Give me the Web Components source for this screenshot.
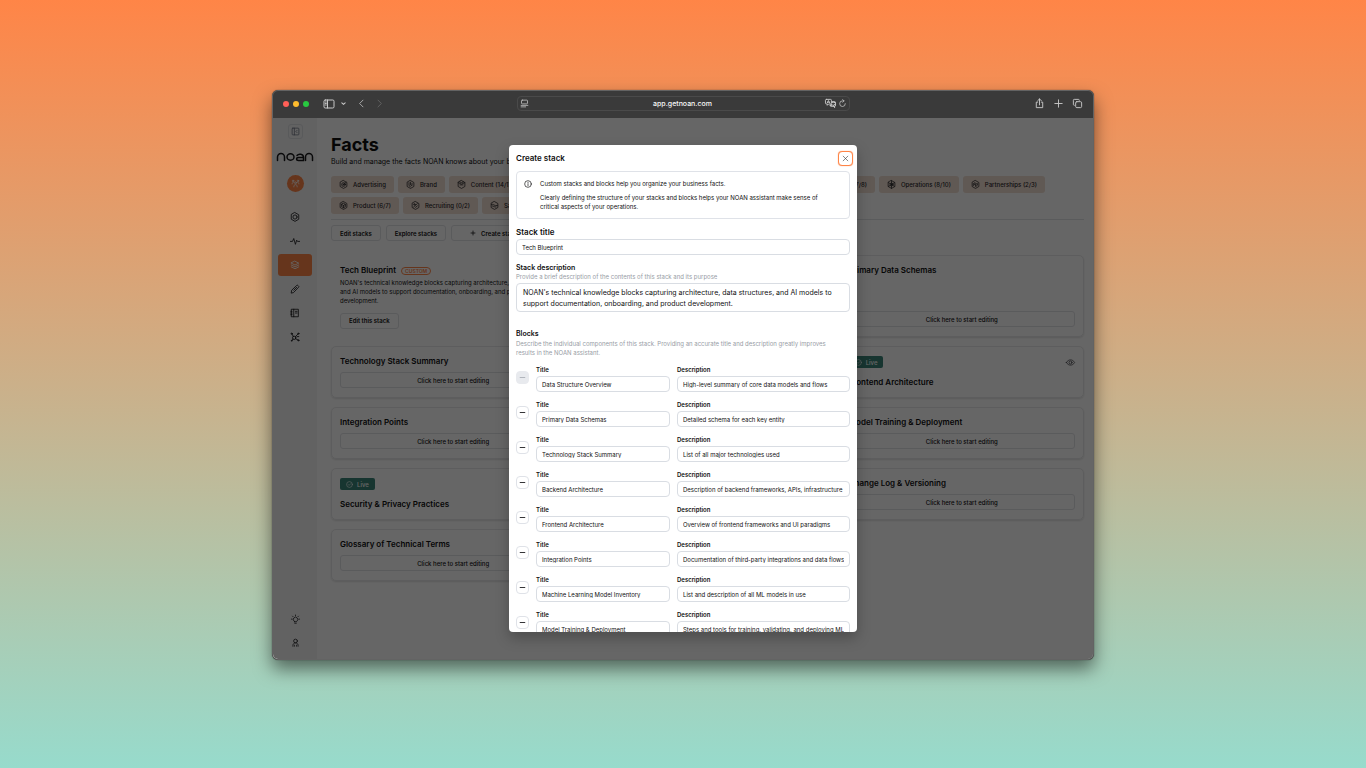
<!DOCTYPE html>
<html lang="en">
<head>
<meta charset="utf-8">
<title>NOAN - Facts</title>
<style>
    body {
        margin: 0;
        font-family: Inter, "Liberation Sans", sans-serif;
        color: #0f0f10;
    }
</style>
</head>
<body>
<noan-desktop></noan-desktop>

<script>
const ICONS = {
    sidebar: '<rect x="2" y="4" width="20" height="16" rx="2.5"/><path d="M9 4v16M5 8h1.5M5 11h1.5M5 14h1.5"/>',
    'chevron-down': '<path d="M4 9l8 7 8-7"/>',
    'chevron-left': '<path d="M16 3l-9 9 9 9"/>',
    'chevron-right': '<path d="M8 3l9 9-9 9"/>',
    reader: '<rect x="4" y="3" width="16" height="10" rx="2"/><path d="M3 17h18M3 21h12"/>',
    translate: '<path d="M3 3h9a2 2 0 0 1 2 2v6a2 2 0 0 1-2 2H8l-3 3v-3H3a2 2 0 0 1-2-2V5a2 2 0 0 1 2-2z"/><path d="M5 10.500l2.500-5 2.500 5M6 9h3"/><path fill="currentColor" d="M16 8h5a2 2 0 0 1 2 2v6a2 2 0 0 1-2 2v3l-3-3h-5a2 2 0 0 1-2-2v-1h2a3 3 0 0 0 3-3z"/><path stroke="#3a3a3a" d="M16 12h5M18.500 11v1c0 2-1 3-3 4M17 13c1 2 2 3 4 3"/>',
    reload: '<path d="M19.500 12.500A7.500 7.500 0 1 1 12 5h4M12.500 1.500L16 5l-3.500 3.500"/>',
    share: '<path d="M8 9H5v12h14V9h-3M12 15V2M8 6l4-4 4 4"/>',
    plus: '<path d="M12 4v16M4 12h16"/>',
    tabs: '<rect x="8" y="8" width="13" height="13" rx="2.500"/><path d="M5 16a2 2 0 0 1-2-2V5a2 2 0 0 1 2-2h9a2 2 0 0 1 2 2"/>',
    collapse: '<rect x="3" y="3" width="18" height="18" rx="2"/><path d="M9 3v18M16 9l-3 3 3 3"/>',
    team: '<circle cx="12" cy="10" r="2.500"/><circle cx="5.500" cy="5" r="2"/><circle cx="18.500" cy="5" r="2"/><path d="M7.500 21c0-4 1.500-6 4.500-6s4.500 2 4.500 6M3 13c0-2.500 1-4 3-4M21 13c0-2.500-1-4-3-4"/>',
    hexnut: '<path d="M12 1.500l9 5.200v10.600l-9 5.200-9-5.200V6.700z"/><circle cx="12" cy="12" r="5"/>',
    activity: '<path d="M1 13h5l3-7 4 14 3-10 2 3h5"/>',
    layers: '<path d="M12 3l9 4.500-9 4.500-9-4.500zM3 12l9 4.500 9-4.500M3 16.500L12 21l9-4.500"/>',
    pencil: '<path d="M3 21l1-6L16 3.500a2 2 0 0 1 3 0l1.500 1.500a2 2 0 0 1 0 3L9 20zM9 15l7-7"/>',
    book: '<path d="M4 3h16v18H4zM9 3v18M13 8h4M13 12h4M2 8h3M2 12h3M2 16h3"/>',
    network: '<circle cx="10" cy="14" r="4"/><circle cx="4" cy="4" r="1.500"/><circle cx="20" cy="4" r="1.500"/><circle cx="20" cy="20" r="1.500"/><circle cx="4" cy="21" r="1"/><path d="M5 5l3 6M19 5l-6 6M13 16l6 3M7 17l-2 3M17 11h4"/>',
    bulb: '<path d="M9 17a6 6 0 1 1 6 0v1H9zM10 22h4M12 0v2M1 11h2M21 11h2M4 3l1.500 1.500M20 3l-1.500 1.500"/>',
    user: '<circle cx="12" cy="8" r="5"/><path d="M5 22v-2c0-4 3-7 7-7s7 3 7 7v2M9 22v-3M15 22v-3"/>',
    minus: '<path d="M4 12h16"/>',
    close: '<path d="M4 4l16 16M20 4L4 20"/>',
    info: '<circle cx="12" cy="12" r="10"/><path d="M12 11v6M12 7v1"/>',
    check: '<circle cx="12" cy="12" r="10"/><path d="M7.500 12l3 3 6-6"/>',
    eye: '<path d="M1 12c3-5 7-7 11-7s8 2 11 7c-3 5-7 7-11 7s-8-2-11-7z"/><circle cx="12" cy="12" r="4"/>',
    advertising: '<path d="M12 1.500l9 5.200v10.600l-9 5.200-9-5.200V6.700z"/><circle cx="12" cy="12" r="5"/><circle cx="12" cy="12" r="1.500"/><path d="M13 11l6-5"/>',
    brand: '<path d="M12 1.500l9 5.200v10.600l-9 5.200-9-5.200V6.700zM8 7v8l4 3M12 6v7l4 2V9"/>',
    content: '<path d="M12 1.500l9 5.200v10.600l-9 5.200-9-5.200V6.700zM3 7l9 4 9-4M7 5l5 2 5-2M8 13l8 0"/>',
    operations: '<path d="M12 1.500l9 5.200v10.600l-9 5.200-9-5.200V6.700zM12 2v20M4 7l16 10M20 7L4 17"/><circle cx="12" cy="12" r="4"/>',
    partnerships: '<path d="M12 1.500l9 5.200v10.600l-9 5.200-9-5.200V6.700zM7 9l4-2v4l-4 3zM13 11l4-2v5l-4 3z"/>',
    product: '<path d="M12 1.500l9 5.200v10.600l-9 5.200-9-5.200V6.700z"/><path d="M12 6l5 3v6l-5 3-5-3V9zM7 9l5 3 5-3M12 12v6"/>',
    recruiting: '<path d="M12 1.500l9 5.200v10.600l-9 5.200-9-5.200V6.700z"/><circle cx="9" cy="9" r="2"/><path d="M7 16l10-9M12 17l5-4"/>',
    sales: '<path d="M12 1.500l9 5.200v10.600l-9 5.200-9-5.200V6.700zM4 9c5-3 7 6 16 3M6 13c3 0 5 4 10 3"/>'
};

class UiIcon extends HTMLElement {
    constructor() {
        super();
        this.attachShadow({ mode: 'open' });
    }

    connectedCallback() {
        this.shadowRoot.innerHTML = `
            <style>
                :host { display: inline-block; flex: none; width: 9px; height: 9px; }
                svg {
                    display: block;
                    width: 100%;
                    height: 100%;
                    overflow: visible;
                    fill: none;
                    stroke: currentColor;
                    stroke-width: var(--icon-stroke, 2);
                    stroke-linecap: round;
                    stroke-linejoin: round;
                }
            </style>
            <svg viewBox="0 0 24 24" aria-hidden="true">${ICONS[this.getAttribute('name')] || ''}</svg>
        `;
    }
}

// Page background with the browser window on it
class NoanDesktop extends HTMLElement {
    constructor() {
        super();
        this.attachShadow({ mode: 'open' });
    }

    connectedCallback() {
        this.shadowRoot.innerHTML = `
            <style>
                :host {
                    display: flex;
                    box-sizing: border-box;
                    height: 100vh;
                    min-height: 480px;
                    padding: 90px 272px 108px;
                    background: linear-gradient(#ff8547, #97dbcc);
                }
                browser-window { flex: 1; min-width: 0; }
                .page { display: flex; height: 100%; background: #fff; }
                side-nav { flex: none; }
                facts-page { flex: 1; min-width: 0; }
            </style>
            <browser-window address="app.getnoan.com">
                <div class="page">
                    <side-nav></side-nav>
                    <facts-page></facts-page>
                </div>
                <create-stack-dialog slot="overlay"></create-stack-dialog>
            </browser-window>
        `;
    }
}

class BrowserWindow extends HTMLElement {
    constructor() {
        super();
        this.attachShadow({ mode: 'open' });
    }

    connectedCallback() {
        this.shadowRoot.innerHTML = `
            <style>
                :host {
                    display: flex;
                    flex-direction: column;
                    overflow: hidden;
                    box-sizing: border-box;
                    border: 1px solid #636363;
                    border-radius: 6px;
                    box-shadow: 0 0 1px #222, 0 9px 18px rgba(0, 0, 0, 0.5);
                    background: #3a3a3a;
                }
                header {
                    display: grid;
                    grid-template-columns: 1fr 333px 1fr;
                    align-items: center;
                    flex: none;
                    box-sizing: border-box;
                    height: 27px;
                    padding: 0 10px 2px;
                    color: #c9c9c9;
                }
                .left, .right { display: flex; align-items: center; }
                .right { justify-content: flex-end; gap: 8px; }
                .light { width: 6px; height: 6px; border-radius: 50%; margin-right: 4px; }
                .light.green { margin-right: 5px; }
                .red { background: #ff5f57; }
                .yellow { background: #febc2e; }
                .green { background: #28c840; }
                button {
                    display: flex;
                    padding: 0;
                    border: 0;
                    background: none;
                    color: inherit;
                }
                .left button { margin-left: 9px; }
                .left .more { margin-left: 6px; }
                .left .more ui-icon { width: 5px; height: 5px; --icon-stroke: 5; }
                .left .back { margin-left: 11px; }
                .left .forward { color: #6c6c6c; }
                .wide ui-icon { width: 12px; height: 12px; }
                .right ui-icon { width: 11px; height: 11px; }
                .address {
                    display: flex;
                    align-items: center;
                    box-sizing: border-box;
                    height: 15px;
                    padding: 0 2px;
                    border: 1px solid #4a4a4a;
                    border-radius: 4px;
                }
                input {
                    flex: 1;
                    min-width: 0;
                    padding: 0 0 0 12px;
                    border: 0;
                    background: none;
                    color: #f8f8f8;
                    font: 500 7px/9px Inter, sans-serif;
                    text-align: center;
                    outline: 0;
                }
                .address .wide ui-icon { width: 11px; height: 11px; }
                .address button + button { margin-left: 2px; }
                main { position: relative; flex: 1; min-height: 0; }
            </style>
            <header>
                <div class="left">
                    <span class="light red"></span>
                    <span class="light yellow"></span>
                    <span class="light green"></span>
                    <button class="wide" aria-label="Sidebar"><ui-icon name="sidebar"></ui-icon></button>
                    <button class="more" aria-label="Tab groups"><ui-icon name="chevron-down"></ui-icon></button>
                    <button class="back" aria-label="Back"><ui-icon name="chevron-left"></ui-icon></button>
                    <button class="forward" aria-label="Forward"><ui-icon name="chevron-right"></ui-icon></button>
                </div>
                <div class="address">
                    <button aria-label="Reader"><ui-icon name="reader"></ui-icon></button>
                    <input aria-label="Address" value="${this.getAttribute('address')}">
                    <button class="wide" aria-label="Translate"><ui-icon name="translate"></ui-icon></button>
                    <button aria-label="Reload"><ui-icon name="reload"></ui-icon></button>
                </div>
                <div class="right">
                    <button aria-label="Share"><ui-icon name="share"></ui-icon></button>
                    <button aria-label="New tab"><ui-icon name="plus"></ui-icon></button>
                    <button aria-label="Show tabs"><ui-icon name="tabs"></ui-icon></button>
                </div>
            </header>
            <main>
                <slot></slot>
                <slot name="overlay"></slot>
            </main>
        `;
    }
}

class SideNav extends HTMLElement {
    constructor() {
        super();
        this.attachShadow({ mode: 'open' });
    }

    connectedCallback() {
        const links = ['hexnut', 'activity', 'layers', 'pencil', 'book', 'network'];
        this.shadowRoot.innerHTML = `
            <style>
                :host {
                    display: flex;
                    flex-direction: column;
                    align-items: center;
                    box-sizing: border-box;
                    width: 44px;
                    padding: 6px 0;
                    background: #f5f5f6;
                }
                button {
                    display: flex;
                    align-items: center;
                    justify-content: center;
                    width: 15px;
                    height: 15px;
                    padding: 0;
                    border: 1px solid #dfe1e4;
                    border-radius: 3px;
                    background: none;
                    color: #6b7280;
                }
                .logo { width: 36px; height: 8px; margin: 14px 0; overflow: visible; }
                .avatar {
                    display: flex;
                    align-items: center;
                    justify-content: center;
                    width: 17px;
                    height: 17px;
                    margin-bottom: 14px;
                    border-radius: 50%;
                    background: #ff8547;
                    color: #fff;
                }
                nav { display: flex; flex-direction: column; gap: 2px; }
                a {
                    display: flex;
                    align-items: center;
                    justify-content: center;
                    width: 34px;
                    height: 22px;
                    border-radius: 3px;
                    color: #18181b;
                }
                a ui-icon { width: 10px; height: 10px; }
                a.active { background: #ff8547; color: #fff; }
                .bottom { margin-top: auto; gap: 1px; }
                .bottom ui-icon { width: 9px; height: 9px; }
            </style>
            <button aria-label="Collapse"><ui-icon name="collapse"></ui-icon></button>
            <svg class="logo" viewBox="0 0 72 16" fill="none" stroke="#18181b" stroke-width="3" stroke-linecap="round" role="img" aria-label="noan">
                <path d="M1 15V8a6 6 0 0 1 14 0v7M57 15V8a6 6 0 0 1 14 0v7"/>
                <ellipse cx="27" cy="8" rx="7" ry="6.500"/>
                <path d="M40 5c3-4 13-4 13 4v6H43c-5 0-5-6 0-6h10"/>
            </svg>
            <span class="avatar"><ui-icon name="team"></ui-icon></span>
            <nav>
                ${links.map(name => `<a href="#${name}" aria-label="${name}" class="${name === 'layers' ? 'active' : ''}"><ui-icon name="${name}"></ui-icon></a>`).join('')}
            </nav>
            <nav class="bottom">
                <a href="#tips" aria-label="Tips"><ui-icon name="bulb"></ui-icon></a>
                <a href="#account" aria-label="Account"><ui-icon name="user"></ui-icon></a>
            </nav>
        `;
    }
}

class StackChip extends HTMLElement {
    constructor() {
        super();
        this.attachShadow({ mode: 'open' });
    }

    connectedCallback() {
        this.shadowRoot.innerHTML = `
            <style>
                :host { display: block; flex: none; }
                button {
                    display: flex;
                    align-items: center;
                    gap: 5px;
                    height: 17px;
                    padding: 0 8px;
                    border: 0;
                    border-radius: 3px;
                    background: #f1ded2;
                    color: #27272a;
                    font: 500 6px/9px Inter, sans-serif;
                    white-space: nowrap;
                }
            </style>
            <button><ui-icon name="${this.getAttribute('icon')}"></ui-icon><slot></slot></button>
        `;
    }
}

class OutlineButton extends HTMLElement {
    constructor() {
        super();
        this.attachShadow({ mode: 'open' });
        this.shadowRoot.innerHTML = `
            <style>
                :host { display: block; flex: none; }
                button {
                    display: flex;
                    align-items: center;
                    justify-content: center;
                    gap: 5px;
                    width: 100%;
                    height: 16px;
                    padding: 0 var(--pad, 8px);
                    border: 1px solid #e2e3e6;
                    border-radius: 3px;
                    background: none;
                    color: inherit;
                    font: var(--weight, 600) 6px/9px Inter, sans-serif;
                    white-space: nowrap;
                }
            </style>
            <button><slot></slot></button>
        `;
    }
}

// One block of the stack: either live or still waiting for its text
class FactCard extends HTMLElement {
    constructor() {
        super();
        this.attachShadow({ mode: 'open' });
    }

    connectedCallback() {
        const live = this.hasAttribute('live');
        this.shadowRoot.innerHTML = `
            <style>
                :host {
                    display: flex;
                    flex-direction: column;
                    justify-content: space-between;
                    box-sizing: border-box;
                    padding: 9px 8px;
                    border: 1px solid #e8e9eb;
                    border-radius: 5px;
                    box-shadow: 0 1px 2px rgba(0, 0, 0, 0.12);
                }
                h3 { margin: 0; font: 600 8px/11px Inter, sans-serif; white-space: nowrap; }
                .top { display: flex; align-items: center; justify-content: space-between; color: #3f3f46; }
                .live {
                    display: flex;
                    align-items: center;
                    gap: 4px;
                    box-sizing: border-box;
                    height: 12px;
                    padding: 0 6px;
                    border-radius: 2px;
                    background: #3a8478;
                    color: #fff;
                    font: 500 6px/9px Inter, sans-serif;
                }
                .live ui-icon { width: 7px; height: 7px; }
                outline-button { --weight: 500; }
            </style>
            ${live ? '<div class="top"><span class="live"><ui-icon name="check"></ui-icon>Live</span><ui-icon name="eye"></ui-icon></div>' : ''}
            <h3><slot></slot></h3>
            ${live ? '' : '<outline-button>Click here to start editing</outline-button>'}
        `;
    }
}

class FactsPage extends HTMLElement {
    constructor() {
        super();
        this.attachShadow({ mode: 'open' });
    }

    connectedCallback() {
        this.shadowRoot.innerHTML = `
            <style>
                :host { display: block; padding: 15px 9px 0 14px; overflow: hidden; }
                h1 { margin: 0; font: 700 18px/24px Inter, sans-serif; }
                .lead { margin: 0 0 10px; font: 400 7px/9px Inter, sans-serif; white-space: nowrap; }
                .chips { display: flex; gap: 4px; margin-bottom: 4px; padding-right: 39px; }
                .space { flex: 1; }
                .actions {
                    display: flex;
                    gap: 5px;
                    margin-top: 5px;
                    padding: 5px 0 14px;
                    border-top: 1px solid #e2e3e6;
                }
                .create { --pad: 18px; }
                .create ui-icon { width: 6px; height: 6px; --icon-stroke: 3; }
                .grid {
                    display: grid;
                    grid-template-columns: repeat(3, minmax(0, 1fr));
                    grid-template-rows: 82px;
                    grid-auto-rows: 52px;
                    gap: 9px 10px;
                }
                .intro { padding: 10px 12px 0 9px; }
                .intro header { display: flex; align-items: center; gap: 5px; }
                .intro h2 { margin: 0; font: 600 8px/11px Inter, sans-serif; }
                .tag {
                    padding: 0 3px;
                    border: 1px solid #ff8547;
                    border-radius: 4px;
                    color: #ff8547;
                    font: 600 5px/6px Inter, sans-serif;
                }
                .intro p { margin: 2px 0; font: 400 6px/9px Inter, sans-serif; }
                .intro outline-button { display: inline-block; }
                .right { grid-column: 3; }
            </style>
            <h1>Facts</h1>
            <p class="lead">Build and manage the facts NOAN knows about your business.</p>
            <div class="chips">
                <stack-chip icon="advertising">Advertising</stack-chip>
                <stack-chip icon="brand">Brand</stack-chip>
                <stack-chip icon="content">Content (14/17)</stack-chip>
                <span class="space"></span>
                <stack-chip icon="hexnut">Market (7/8)</stack-chip>
                <stack-chip icon="operations">Operations (8/10)</stack-chip>
                <stack-chip icon="partnerships">Partnerships (2/3)</stack-chip>
            </div>
            <div class="chips">
                <stack-chip icon="product">Product (6/7)</stack-chip>
                <stack-chip icon="recruiting">Recruiting (0/2)</stack-chip>
                <stack-chip icon="sales">Sales</stack-chip>
            </div>
            <div class="actions">
                <outline-button>Edit stacks</outline-button>
                <outline-button>Explore stacks</outline-button>
                <outline-button class="create"><ui-icon name="plus"></ui-icon>Create stack</outline-button>
            </div>
            <div class="grid">
                <section class="intro">
                    <header><h2>Tech Blueprint</h2><span class="tag">CUSTOM</span></header>
                    <p>NOAN's technical knowledge blocks capturing architecture, data structures, and AI models to support documentation, onboarding, and product development.</p>
                    <outline-button>Edit this stack</outline-button>
                </section>
                <fact-card class="right">Primary Data Schemas</fact-card>
                <fact-card>Technology Stack Summary</fact-card>
                <fact-card class="right" live>Frontend Architecture</fact-card>
                <fact-card>Integration Points</fact-card>
                <fact-card class="right">Model Training &amp; Deployment</fact-card>
                <fact-card live>Security &amp; Privacy Practices</fact-card>
                <fact-card class="right">Change Log &amp; Versioning</fact-card>
                <fact-card>Glossary of Technical Terms</fact-card>
            </div>
        `;
    }
}

class BlockRow extends HTMLElement {
    constructor() {
        super();
        this.attachShadow({ mode: 'open' });
    }

    connectedCallback() {
        this.shadowRoot.innerHTML = `
            <style>
                :host { display: grid; grid-template-columns: 13px 134fr 173fr; gap: 7px; }
                button {
                    display: flex;
                    align-items: center;
                    justify-content: center;
                    width: 13px;
                    height: 13px;
                    margin-top: 6px;
                    padding: 0;
                    border: 1px solid #dfe2e8;
                    border-radius: 4px;
                    background: #fff;
                    color: #18181b;
                }
                button ui-icon { width: 7px; height: 7px; --icon-stroke: 3; }
                button:disabled { border-color: #e8eaee; background: #e8eaee; color: #a9adb5; }
                label { display: block; margin-bottom: 2px; font: 600 6px/9px Inter, sans-serif; }
                input {
                    display: block;
                    box-sizing: border-box;
                    width: 100%;
                    height: 16px;
                    padding: 0 5px;
                    border: 1px solid #d9dde3;
                    border-radius: 4px;
                    background: #fff;
                    color: inherit;
                    font: 400 6px/9px Inter, sans-serif;
                }
            </style>
            <button aria-label="Remove block" ${this.hasAttribute('locked') ? 'disabled' : ''}><ui-icon name="minus"></ui-icon></button>
            <div>
                <label for="title">Title</label>
                <input id="title" value="${this.getAttribute('heading').replace('&', '&amp;')}">
            </div>
            <div>
                <label for="description">Description</label>
                <input id="description" value="${this.getAttribute('description')}">
            </div>
        `;
    }
}

class CreateStackDialog extends HTMLElement {
    constructor() {
        super();
        this.attachShadow({ mode: 'open' });
    }

    connectedCallback() {
        this.shadowRoot.innerHTML = `
            <style>
                :host {
                    position: absolute;
                    inset: 0;
                    display: flex;
                    align-items: center;
                    justify-content: center;
                    background: rgba(0, 0, 0, 0.6);
                }
                form {
                    box-sizing: border-box;
                    width: 348px;
                    max-width: 90%;
                    height: 90%;
                    padding: 6px 7px 0;
                    overflow: hidden;
                    border-radius: 4px;
                    background: #fff;
                    box-shadow: 0 6px 14px rgba(0, 0, 0, 0.25);
                }
                header { display: flex; align-items: center; justify-content: space-between; margin: 0 -3px 5px 0; }
                h2 { margin: 0; font: 600 8px/11px Inter, sans-serif; }
                header button {
                    display: flex;
                    align-items: center;
                    justify-content: center;
                    width: 15px;
                    height: 15px;
                    padding: 0;
                    border: 1px solid #ff8547;
                    border-radius: 4px;
                    background: #fff;
                    color: #333;
                    box-shadow: 0 0 1px #ff8547;
                }
                header ui-icon { width: 7px; height: 7px; }
                .note {
                    display: flex;
                    gap: 8px;
                    margin-bottom: 8px;
                    padding: 7px 18px 7px 7px;
                    border: 1px solid #dfe2e8;
                    border-radius: 4px;
                    font: 400 6px/9px Inter, sans-serif;
                }
                .note ui-icon { width: 8px; height: 8px; margin-top: 1px; }
                .note p { margin: 0 0 5px; }
                .field { display: block; font: 600 7px/9px Inter, sans-serif; }
                .first { margin-bottom: 1px; font: 600 8px/11px Inter, sans-serif; }
                .blocks { margin-bottom: 1px; }
                .hint { margin: 0; padding-right: 8px; color: #979ca5; font: 400 6px/9px Inter, sans-serif; }
                input, textarea {
                    display: block;
                    box-sizing: border-box;
                    width: 100%;
                    padding: 0 5px;
                    border: 1px solid #d9dde3;
                    border-radius: 4px;
                    background: #fff;
                    color: inherit;
                    font: 400 6px/9px Inter, sans-serif;
                }
                input { height: 16px; margin-bottom: 8px; }
                textarea {
                    height: 29px;
                    margin: 2px 0 17px;
                    padding: 3px 6px;
                    overflow: hidden;
                    resize: none;
                    font: 400 7px/11px Inter, sans-serif;
                }
                .rows { display: grid; gap: 8px; margin-top: 8px; }
            </style>
            <form>
                <header>
                    <h2>Create stack</h2>
                    <button type="button" aria-label="Close"><ui-icon name="close"></ui-icon></button>
                </header>
                <div class="note">
                    <ui-icon name="info"></ui-icon>
                    <div>
                        <p>Custom stacks and blocks help you organize your business facts.</p>
                        <div>Clearly defining the structure of your stacks and blocks helps your NOAN assistant make sense of critical aspects of your operations.</div>
                    </div>
                </div>
                <label class="field first" for="stack-title">Stack title</label>
                <input id="stack-title" value="Tech Blueprint">
                <label class="field" for="stack-description">Stack description</label>
                <p class="hint">Provide a brief description of the contents of this stack and its purpose</p>
                <textarea id="stack-description">NOAN's technical knowledge blocks capturing architecture, data structures, and AI models to support documentation, onboarding, and product development.</textarea>
                <div class="field blocks">Blocks</div>
                <p class="hint">Describe the individual components of this stack. Providing an accurate title and description greatly improves results in the NOAN assistant.</p>
                <div class="rows">
                    <block-row locked heading="Data Structure Overview" description="High-level summary of core data models and flows"></block-row>
                    <block-row heading="Primary Data Schemas" description="Detailed schema for each key entity"></block-row>
                    <block-row heading="Technology Stack Summary" description="List of all major technologies used"></block-row>
                    <block-row heading="Backend Architecture" description="Description of backend frameworks, APIs, infrastructure"></block-row>
                    <block-row heading="Frontend Architecture" description="Overview of frontend frameworks and UI paradigms"></block-row>
                    <block-row heading="Integration Points" description="Documentation of third-party integrations and data flows"></block-row>
                    <block-row heading="Machine Learning Model Inventory" description="List and description of all ML models in use"></block-row>
                    <block-row heading="Model Training & Deployment" description="Steps and tools for training, validating, and deploying ML models"></block-row>
                </div>
            </form>
        `;
    }
}

customElements.define('ui-icon', UiIcon);
customElements.define('outline-button', OutlineButton);
customElements.define('stack-chip', StackChip);
customElements.define('fact-card', FactCard);
customElements.define('block-row', BlockRow);
customElements.define('side-nav', SideNav);
customElements.define('facts-page', FactsPage);
customElements.define('create-stack-dialog', CreateStackDialog);
customElements.define('browser-window', BrowserWindow);
customElements.define('noan-desktop', NoanDesktop);
</script>
</body>
</html>
